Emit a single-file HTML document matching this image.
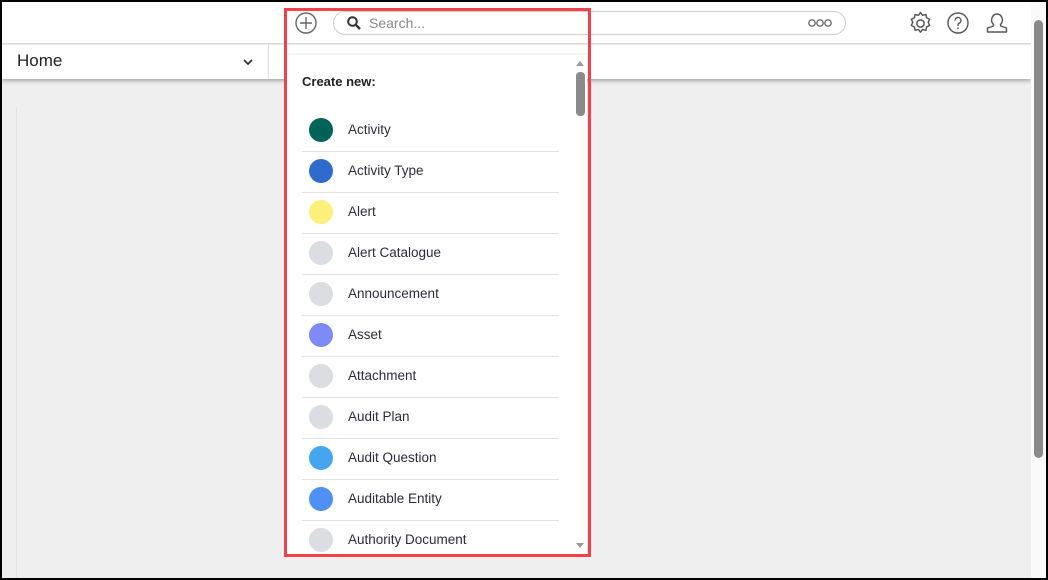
<!DOCTYPE html>
<html><head><style>
*{box-sizing:border-box;margin:0;padding:0}
body{width:1048px;height:580px;overflow:hidden;background:#000;font-family:"Liberation Sans",sans-serif;position:relative}
.frame{position:absolute;left:2px;top:2px;width:1044px;height:576px;background:#efefef;overflow:hidden}
.top{position:absolute;left:0;top:0;width:1029px;height:42px;background:#fff;border-bottom:1px solid #ddd}
.nav{position:absolute;left:0;top:43px;width:1029px;height:34px;background:#fff;box-shadow:0 2px 4px rgba(0,0,0,.3)}
.pscroll{position:absolute;left:1029px;top:0;width:15px;height:576px;background:#fafafa}
.abs{position:absolute}
.panel{position:absolute;left:285px;top:53px;width:300px;height:500px;background:#fff;box-shadow:0 0 3px rgba(0,0,0,.15)}
.row{position:absolute;left:15px;width:257px;height:41px;border-bottom:1px solid #e2e2e2}
.row .c{position:absolute;left:7px;top:7px;width:24px;height:24px;border-radius:50%}
.row span{position:absolute;left:46px;top:11px;font-size:13.5px;color:#2b2b3a}
</style></head><body>
<div class="frame">
 <div class="top">
  <svg class="abs" style="left:293px;top:10px" width="22" height="22" viewBox="0 0 22 22"><circle cx="11" cy="11" r="10" fill="none" stroke="#666" stroke-width="1.4"/><path d="M11 5v12M5 11h12" stroke="#666" stroke-width="1.4"/></svg>
  <div class="abs" style="left:331px;top:9px;width:513px;height:24px;border:1px solid #ccc;border-radius:12px"></div>
  <svg class="abs" style="left:345px;top:14px" width="14" height="14" viewBox="0 0 14 14"><circle cx="5.5" cy="5.5" r="4.3" fill="none" stroke="#333" stroke-width="2"/><path d="M8.8 8.8L13 13" stroke="#333" stroke-width="2.4"/></svg>
  <div class="abs" style="left:367px;top:13px;font-size:14px;color:#888">Search...</div>
  <svg class="abs" style="left:806px;top:16px" width="24" height="10" viewBox="0 0 24 10"><circle cx="4" cy="5" r="3.2" fill="none" stroke="#555" stroke-width="1.2"/><circle cx="12" cy="5" r="3.2" fill="none" stroke="#555" stroke-width="1.2"/><circle cx="20" cy="5" r="3.2" fill="none" stroke="#555" stroke-width="1.2"/></svg>
  <svg class="abs" style="left:906px;top:9px" width="25" height="25" viewBox="0 0 24 24"><path d="M12 1.5l2 2.6 3.2-.8.6 3.2 3 1.4-1.4 3 1.4 3-3 1.4-.6 3.2-3.2-.8-2 2.6-2-2.6-3.2.8-.6-3.2-3-1.4 1.4-3-1.4-3 3-1.4.6-3.2 3.2.8z" fill="none" stroke="#555" stroke-width="1.4" stroke-linejoin="round"/><circle cx="12" cy="12" r="3.5" fill="none" stroke="#555" stroke-width="1.4"/></svg>
  <svg class="abs" style="left:945px;top:10px" width="22" height="22" viewBox="0 0 22 22"><circle cx="11" cy="11" r="10" fill="none" stroke="#555" stroke-width="1.4"/><path d="M8 8.5a3 3 0 1 1 4 2.8c-.8.4-1 1-1 1.8v.8" fill="none" stroke="#555" stroke-width="1.4"/><circle cx="11" cy="16.3" r=".9" fill="#555"/></svg>
  <svg class="abs" style="left:984px;top:10px" width="22" height="22" viewBox="0 0 22 22"><path d="M11 2a5.5 6 0 0 1 3.5 10.5v1.5l6 2v4H1.5v-4l6-2v-1.5A5.5 6 0 0 1 11 2z" fill="none" stroke="#555" stroke-width="1.4" stroke-linejoin="round"/></svg>
 </div>
 <div class="nav">
  <div class="abs" style="left:15px;top:6px;font-size:17px;color:#222">Home</div>
  <svg class="abs" style="left:241px;top:13px" width="10" height="8" viewBox="0 0 10 8"><path d="M1 2l4 4 4-4" fill="none" stroke="#333" stroke-width="1.8"/></svg>
  <div class="abs" style="left:266px;top:0;width:1px;height:34px;background:#ddd"></div>
 </div>
 <div class="abs" style="left:14px;top:105px;width:1px;height:480px;background:#e2e2e2"></div>
 <div class="pscroll">
  <div class="abs" style="left:3px;top:18px;width:9px;height:438px;background:#8a8a8a;border-radius:5px"></div>
 </div>
 <div class="panel">
  <div class="abs" style="left:15px;top:19px;font-size:13px;font-weight:bold;color:#222">Create new:</div>
  <div class="row" style="top:56px"><div class="c" style="background:#006359"></div><span>Activity</span></div>
  <div class="row" style="top:97px"><div class="c" style="background:#2f6bcc"></div><span>Activity Type</span></div>
  <div class="row" style="top:138px"><div class="c" style="background:#fdf07a"></div><span>Alert</span></div>
  <div class="row" style="top:179px"><div class="c" style="background:#dadde1"></div><span>Alert Catalogue</span></div>
  <div class="row" style="top:220px"><div class="c" style="background:#dadde1"></div><span>Announcement</span></div>
  <div class="row" style="top:261px"><div class="c" style="background:#7e8af8"></div><span>Asset</span></div>
  <div class="row" style="top:302px"><div class="c" style="background:#dadde1"></div><span>Attachment</span></div>
  <div class="row" style="top:343px"><div class="c" style="background:#dadde1"></div><span>Audit Plan</span></div>
  <div class="row" style="top:384px"><div class="c" style="background:#45a6ef"></div><span>Audit Question</span></div>
  <div class="row" style="top:425px"><div class="c" style="background:#4f8ff6"></div><span>Auditable Entity</span></div>
  <div class="row" style="top:466px;border:none"><div class="c" style="background:#dadde1"></div><span>Authority Document</span></div>
  <div class="abs" style="left:289px;top:17px;width:9px;height:44px;background:#8a8a8a;border-radius:4px"></div>
  <div class="abs" style="left:289px;top:6px;width:0;height:0;border-left:4px solid transparent;border-right:4px solid transparent;border-bottom:5px solid #999"></div>
  <div class="abs" style="left:289px;top:488px;width:0;height:0;border-left:4px solid transparent;border-right:4px solid transparent;border-top:5px solid #999"></div>
 </div>
 <div class="abs" style="left:282px;top:6px;width:307px;height:549px;border:3px solid #f0424a"></div>
</div>
</body></html>
